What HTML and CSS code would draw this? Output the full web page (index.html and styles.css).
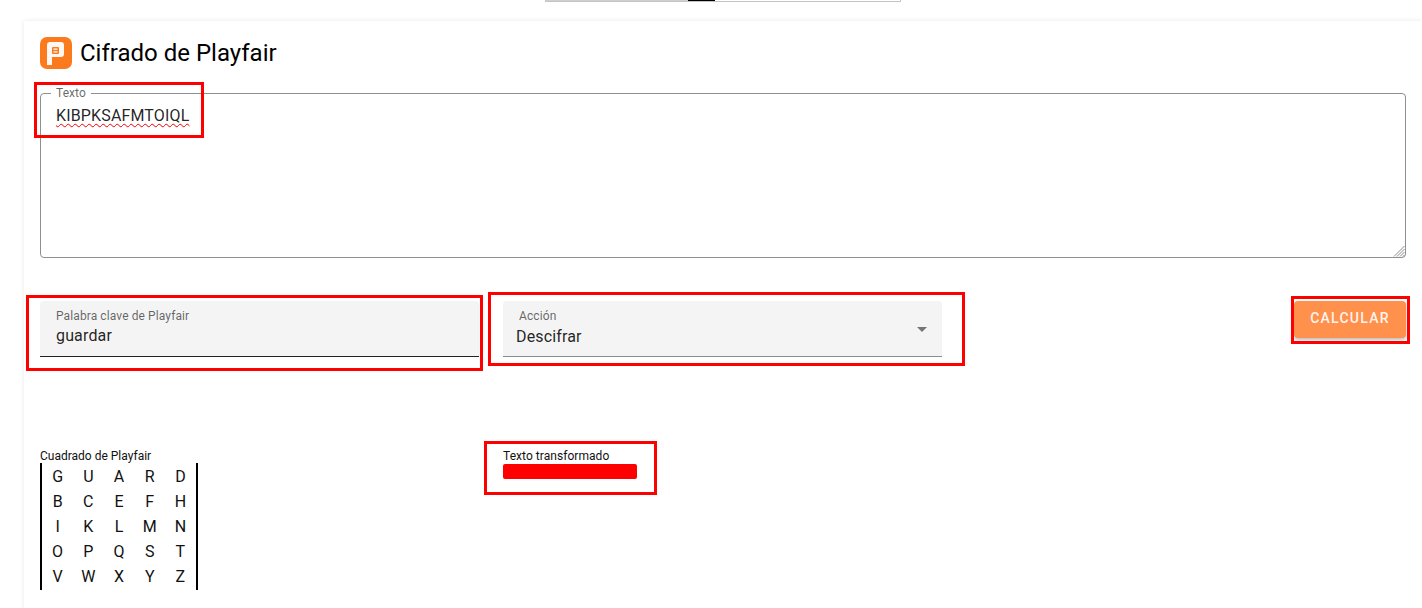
FILE: index.html
```html
<!DOCTYPE html>
<html lang="es">
<head>
<meta charset="utf-8">
<title>Cifrado de Playfair</title>
<link rel="stylesheet" href="styles.css">
</head>
<body>
<div class="topbar"><span class="topbar-fill"></span><span class="topbar-thumb"></span></div>
<main class="card">
  <header class="title-row">
    <svg class="logo" width="32" height="32" viewBox="0 0 32 32" aria-hidden="true">
      <rect width="32" height="32" rx="7" fill="#fb7a1e"/>
      <path d="M7 28V8Q7 5 10 5H21Q24 5 24 8V17Q24 20 21 20H12V28Z" fill="#fff" fill-opacity="0.94"/>
      <rect x="12" y="10" width="7" height="7" rx="1" fill="#fb7a1e"/>
      <path d="M13.500 12.200H17.500M13.500 14.800H17.500" stroke="#fff" stroke-width="1.200"/>
    </svg>
    <h1 class="title">Cifrado de Playfair</h1>
  </header>

  <section class="outlined">
    <span class="outlined-label">Texto</span>
    <span class="outlined-value">KIBPKSAFMTOIQL</span>
    <svg class="grip" width="12" height="12" viewBox="0 0 12 12" aria-hidden="true">
      <path d="M11.500 1L1 11.500M11.500 4L4 11.500M11.500 7L7 11.500M11.500 10L10 11.500" stroke="#8a8a8a" stroke-width="1" fill="none"/>
    </svg>
    <span class="mark mark-text"></span>
  </section>

  <section class="controls">
    <div class="filled filled-key">
      <span class="filled-label">Palabra clave de Playfair</span>
      <span class="filled-value">guardar</span>
      <span class="mark mark-key"></span>
    </div>
    <div class="filled filled-select">
      <span class="filled-label select-label">Acción</span>
      <span class="filled-value">Descifrar</span>
      <span class="caret"></span>
      <span class="mark mark-select"></span>
    </div>
    <button class="calc" type="button">CALCULAR<span class="mark mark-calc"></span></button>
  </section>

  <section class="results">
    <div class="square-col">
      <div class="caption">Cuadrado de Playfair</div>
      <div class="square">
        <span>G</span><span>U</span><span>A</span><span>R</span><span>D</span>
        <span>B</span><span>C</span><span>E</span><span>F</span><span>H</span>
        <span>I</span><span>K</span><span>L</span><span>M</span><span>N</span>
        <span>O</span><span>P</span><span>Q</span><span>S</span><span>T</span>
        <span>V</span><span>W</span><span>X</span><span>Y</span><span>Z</span>
      </div>
    </div>
    <div class="output-col">
      <div class="caption caption-output">Texto transformado</div>
      <div class="redacted"></div>
      <span class="mark mark-output"></span>
    </div>
  </section>
</main>
</body>
</html>
```
FILE: styles.css
```css
* { box-sizing: border-box; }
html, body { margin: 0; height: 100%; overflow: hidden; }
body {
  background: #fff;
  font-family: Roboto, "Liberation Sans", sans-serif;
  color: rgba(0, 0, 0, 0.87);
  position: relative;
}
.topbar {
  width: 356px;
  height: 2px;
  margin-left: 545px;
  display: flex;
  border: 1px solid #c4c4c4;
  border-top: 0;
  background: #fff;
}
.topbar-fill { width: 142px; background: #cfcfcf; }
.topbar-thumb { width: 27px; background: #000; }

.card {
  margin: 19px 0 0 24px;
  height: 600px;
  padding: 16px 16px 0;
  background: #fff;
  box-shadow: 0 0 5px rgba(0, 0, 0, 0.09);
}
.title-row { display: flex; align-items: center; gap: 8px; height: 32px; }
.logo { flex: none; }
.title { margin: 0; font-size: 24px; font-weight: 400; color: #000; letter-spacing: 0; }

.mark { position: absolute; border: 3px solid #f00; pointer-events: none; }

.outlined {
  position: relative;
  height: 165px;
  margin-top: 24px;
  border: 1px solid #8f8f8f;
  border-radius: 4px;
}
.outlined-label {
  position: absolute;
  left: 10px;
  top: -7px;
  padding: 0 5px;
  background: #fff;
  font-size: 12px;
  line-height: 13px;
  letter-spacing: 0.05px;
  color: rgba(0, 0, 0, 0.6);
}
.outlined-value {
  position: absolute;
  left: 15px;
  top: 13px;
  font-size: 16px;
  line-height: 18px;
  letter-spacing: 0.15px;
  text-decoration: underline wavy #f00000 1px;
  text-underline-offset: 2px;
}
.grip { position: absolute; right: 0; bottom: 0; }
.mark-text { left: -7px; top: -12px; width: 170px; height: 56px; }

.controls { display: flex; align-items: flex-start; margin-top: 43px; }
.filled {
  position: relative;
  width: 439px;
  height: 56px;
  padding: 8px 16px 0;
  background: #f4f4f4;
  border-radius: 4px 4px 0 0;
  border-bottom: 1px solid #222;
  display: flex;
  flex-direction: column;
}
.filled-select { margin-left: 24px; padding-left: 13px; border-bottom-color: #8c8c8c; }
.filled-label { font-size: 12px; line-height: 15px; letter-spacing: 0.1px; color: rgba(0, 0, 0, 0.6); }
.select-label { margin-left: 3px; }
.filled-value { margin-top: 2px; font-size: 16px; line-height: 20px; letter-spacing: 0.15px; }
.select-label + .filled-value { margin-top: 3px; }
.caret {
  position: absolute;
  right: 15px;
  top: 26px;
  border-left: 5px solid transparent;
  border-right: 5px solid transparent;
  border-top: 5px solid #757575;
}
.mark-key { left: -14px; top: -6px; width: 457px; height: 76px; }
.mark-select { left: -15px; top: -9px; width: 477px; height: 74px; }

.calc {
  position: relative;
  margin-left: auto;
  width: 112px;
  height: 37px;
  padding: 0 0 3px;
  border: 0;
  border-radius: 4px;
  background: #ff914d;
  color: rgba(255, 255, 255, 0.92);
  font: 500 14px Roboto, "Liberation Sans", sans-serif;
  letter-spacing: 1.25px;
  box-shadow: 0 2px 3px rgba(0, 0, 0, 0.25);
}
.mark-calc { left: -3px; top: -5px; width: 119px; height: 48px; }

.results { display: flex; align-items: flex-start; margin-top: 92px; }
.square-col { width: 463px; }
.caption { font-size: 12px; line-height: 14px; color: #111; }
.caption-output { letter-spacing: 0.05px; }
.square {
  width: 158px;
  height: 127px;
  padding: 1px 0;
  border-left: 2px solid #000;
  border-right: 2px solid #000;
  display: grid;
  grid-template-columns: repeat(5, 30.7px);
  grid-auto-rows: 25px;
  justify-content: center;
  align-items: center;
  justify-items: center;
  font-size: 16px;
  color: #111;
}
.output-col { position: relative; }
.redacted { width: 134px; height: 15px; margin-top: 1px; border-radius: 2px; background: #f00; }
.mark-output { left: -19px; top: -8px; width: 173px; height: 54px; }
```
